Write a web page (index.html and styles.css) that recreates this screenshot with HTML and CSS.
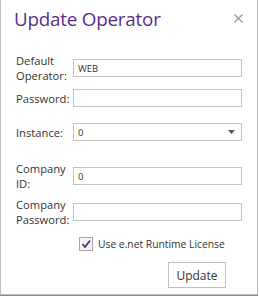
FILE: index.html
```html
<!DOCTYPE html>
<html>
<head>
<meta charset="utf-8">
<link rel="stylesheet" href="styles.css">
</head>
<body>
<div class="dialog">
  <div class="header">
    <h1 class="title">Update Operator</h1>
    <span class="close">
      <svg width="9" height="9" viewBox="0 0 9 9"><path d="M0.5 0.5 L8.5 8.5 M8.5 0.5 L0.5 8.5" stroke="#9a9a9a" stroke-width="1.4" fill="none"/></svg>
    </span>
  </div>
  <div class="form">
    <div class="row tall first">
      <label class="lbl">Default Operator:</label>
      <input class="field" type="text" value="WEB">
    </div>
    <div class="row short gap-s">
      <label class="lbl">Password:</label>
      <input class="field" type="password" value="">
    </div>
    <div class="row short gap-m">
      <label class="lbl">Instance:</label>
      <div class="field select">
        <span>0</span>
        <svg class="arrow" width="7" height="4" viewBox="0 0 7 4"><path d="M0 0 H7 L3.5 4 Z" fill="#555"/></svg>
      </div>
    </div>
    <div class="row tall gap-l">
      <label class="lbl">Company ID:</label>
      <input class="field" type="text" value="0">
    </div>
    <div class="row tall gap-s">
      <label class="lbl">Company Password:</label>
      <input class="field" type="text" value="">
    </div>
    <div class="check-row">
      <span class="checkbox">
        <svg width="12" height="12" viewBox="0 0 12 12"><path d="M2.5 6 L5 9 L10 2.5" stroke="#5b2a86" stroke-width="1.8" fill="none"/></svg>
      </span>
      <span class="check-label">Use e.net Runtime License</span>
    </div>
    <div class="btn-row">
      <button class="btn">Update</button>
    </div>
  </div>
</div>
</body>
</html>
```
FILE: styles.css
```css
html, body {
  margin: 0;
  padding: 0;
  background: #ffffff;
}
body {
  width: 259px;
  height: 296px;
  overflow: hidden;
  font-family: "Open Sans", "Noto Sans", sans-serif;
  color: #333333;
}
.dialog {
  box-sizing: border-box;
  width: 258px;
  height: 295px;
  border: 1px solid #bdbdbd;
  border-top: none;
  background: #ffffff;
  box-shadow: 0 1px 0 #8a8a8a;
}
.header {
  height: 53px;
  display: flex;
  justify-content: space-between;
  align-items: flex-start;
}
.title {
  margin: 0;
  padding: 5px 0 0 13px;
  font-weight: 400;
  font-size: 18.8px;
  line-height: 28px;
  color: #5a2d8c;
  letter-spacing: -0.2px;
}
.close {
  margin: 14px 14px 0 0;
  display: flex;
}
.form {
  padding-left: 15px;
}
.row {
  display: flex;
  align-items: center;
}
.row.tall { height: 30px; }
.row.short { height: 18px; }
.gap-s { margin-top: 6px; }
.gap-m { margin-top: 16px; }
.gap-l { margin-top: 20px; }
.lbl {
  width: 57px;
  font-size: 11.2px;
  line-height: 15px;
  color: #333;
}
.field {
  box-sizing: border-box;
  width: 169px;
  height: 18px;
  margin: 0;
  border: 1px solid #c4c4c4;
  border-radius: 0;
  padding: 0 4px;
  font-family: "Open Sans", sans-serif;
  font-size: 9.5px;
  color: #333;
  background: #fff;
  outline: none;
}
.select {
  display: flex;
  align-items: center;
  justify-content: space-between;
  padding: 0 6px 0 4px;
}
.arrow {
  display: block;
}
.check-row {
  margin-top: 10px;
  height: 14px;
  display: flex;
  align-items: center;
  padding-left: 63px;
}
.checkbox {
  box-sizing: border-box;
  width: 14px;
  height: 14px;
  border: 1px solid #a8a8a8;
  background: #f4f4f4;
  display: flex;
  align-items: center;
  justify-content: center;
}
.check-label {
  margin-left: 5px;
  font-size: 10.3px;
  color: #333;
}
.btn-row {
  margin-top: 11px;
  display: flex;
  padding-left: 152px;
}
.btn {
  box-sizing: border-box;
  width: 58px;
  height: 26px;
  border: 1px solid #c0c0c0;
  background: #fff;
  font-family: "Open Sans", sans-serif;
  font-size: 12px;
  color: #333;
  padding: 0;
}
```
